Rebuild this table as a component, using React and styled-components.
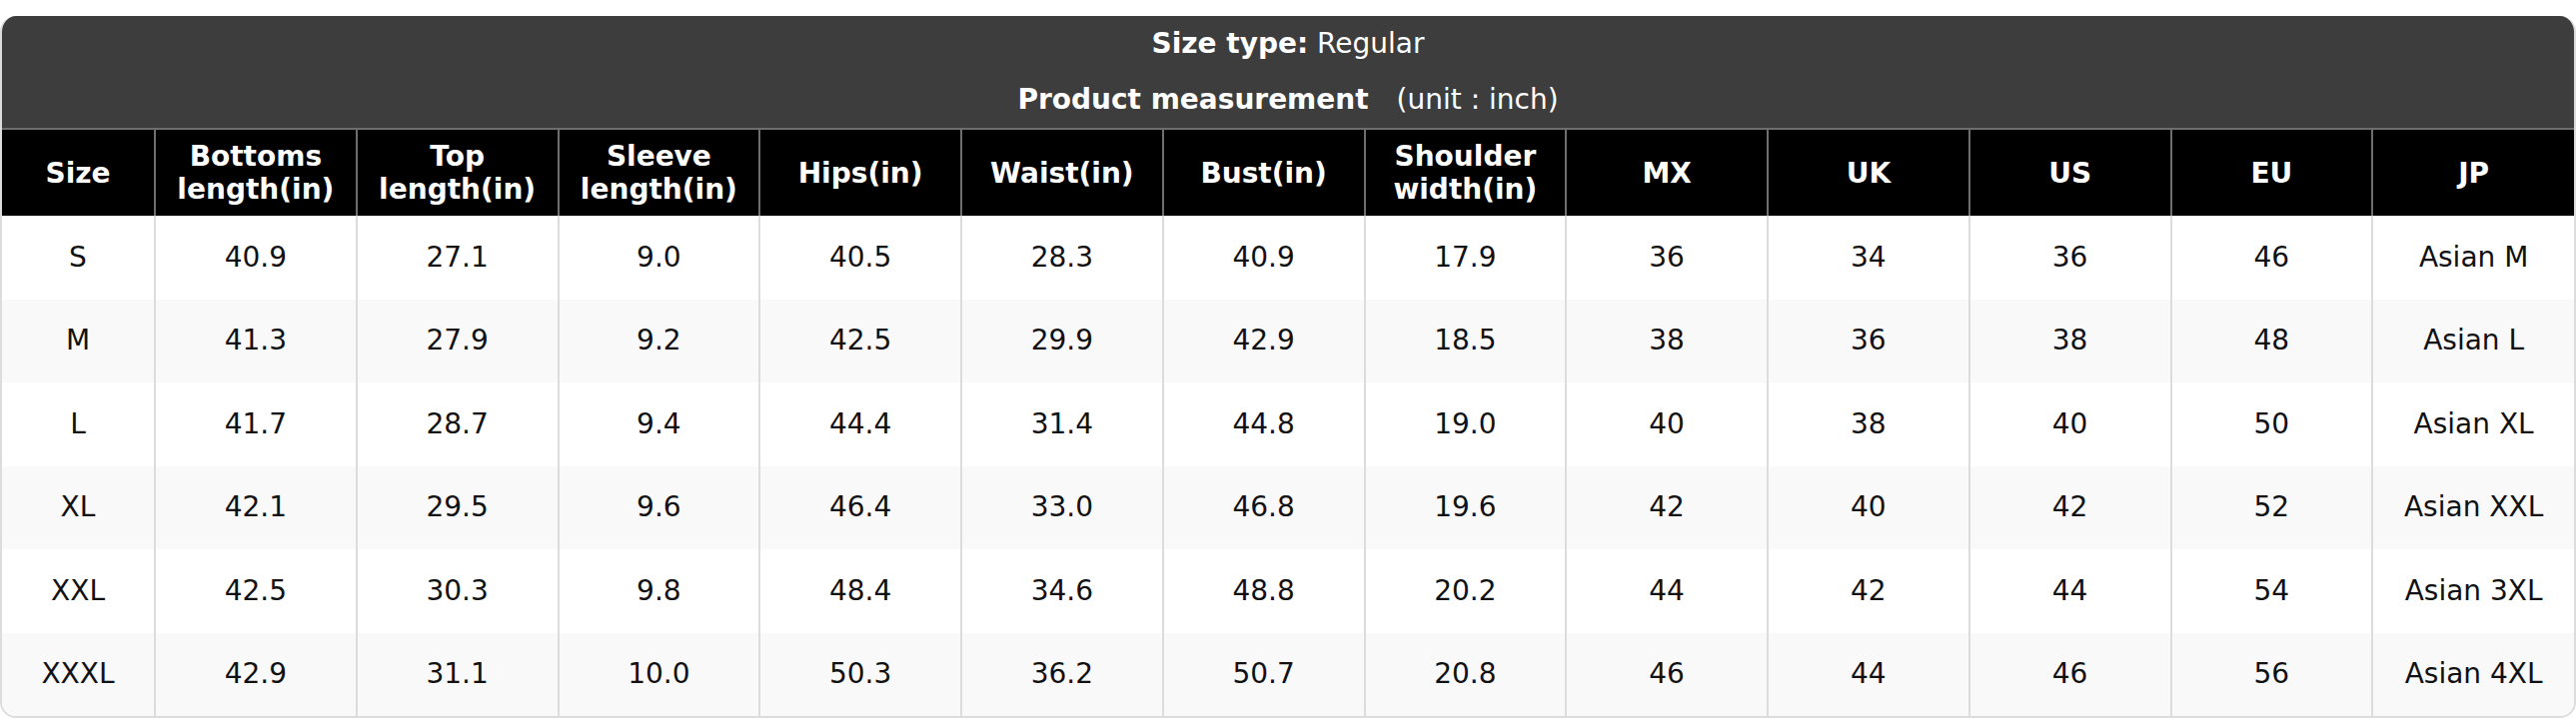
import React from "react";
import styled, { createGlobalStyle } from "styled-components";

const GlobalStyle = createGlobalStyle`
  html, body {
    margin: 0;
    padding: 0;
    background: #ffffff;
    font-family: "DejaVu Sans", "Noto Sans", sans-serif;
  }
`;

const Card = styled.div`
  margin-top: 16px;
  width: 100%;
  box-sizing: border-box;
  border-radius: 16px;
  overflow: hidden;
  border: 2px solid #dcdcdc;
  border-top: none;
  background: #ffffff;
`;

const Banner = styled.div`
  background: #3d3d3d;
  color: #ffffff;
  display: flex;
  flex-direction: column;
  align-items: center;
`;

const BannerLine = styled.div`
  font-size: 28px;
  line-height: 34px;
  padding: 11px 0;
  white-space: pre;
`;

const Strong = styled.span`
  font-weight: bold;
`;

const Unit = styled.span`
  margin-left: 28px;
`;

const Table = styled.table`
  width: 100%;
  border-collapse: collapse;
  table-layout: fixed;
`;

const HeadCell = styled.th`
  background: #000000;
  color: #ffffff;
  font-size: 28px;
  line-height: 33px;
  font-weight: bold;
  padding: 10px 4px;
  height: 86px;
  box-sizing: border-box;
  border: 2px solid #6e6e6e;
  border-bottom: none;
  &:first-child {
    border-left: none;
  }
  &:last-child {
    border-right: none;
  }
`;

const Row = styled.tr`
  background: ${(p) => (p.$alt ? "#f9f9f9" : "#ffffff")};
`;

const Cell = styled.td`
  font-size: 28px;
  line-height: 34px;
  color: #111111;
  text-align: center;
  height: 83.5px;
  box-sizing: border-box;
  padding: 0 4px;
  border-left: 2px solid #dcdcdc;
  &:first-child {
    border-left: none;
  }
`;

const headers = [
  "Size",
  "Bottoms length(in)",
  "Top length(in)",
  "Sleeve length(in)",
  "Hips(in)",
  "Waist(in)",
  "Bust(in)",
  "Shoulder width(in)",
  "MX",
  "UK",
  "US",
  "EU",
  "JP",
];

const rows = [
  ["S", "40.9", "27.1", "9.0", "40.5", "28.3", "40.9", "17.9", "36", "34", "36", "46", "Asian M"],
  ["M", "41.3", "27.9", "9.2", "42.5", "29.9", "42.9", "18.5", "38", "36", "38", "48", "Asian L"],
  ["L", "41.7", "28.7", "9.4", "44.4", "31.4", "44.8", "19.0", "40", "38", "40", "50", "Asian XL"],
  ["XL", "42.1", "29.5", "9.6", "46.4", "33.0", "46.8", "19.6", "42", "40", "42", "52", "Asian XXL"],
  ["XXL", "42.5", "30.3", "9.8", "48.4", "34.6", "48.8", "20.2", "44", "42", "44", "54", "Asian 3XL"],
  ["XXXL", "42.9", "31.1", "10.0", "50.3", "36.2", "50.7", "20.8", "46", "44", "46", "56", "Asian 4XL"],
];

export default function App() {
  return (
    <>
      <GlobalStyle />
      <Card>
        <Banner>
          <BannerLine>
            <Strong>Size type:</Strong> Regular
          </BannerLine>
          <BannerLine>
            <Strong>Product measurement</Strong>
            <Unit>(unit : inch)</Unit>
          </BannerLine>
        </Banner>
        <Table>
          <colgroup>
            <col style={{ width: "153px" }} />
            {headers.slice(1).map((h) => (
              <col key={h} />
            ))}
          </colgroup>
          <thead>
            <tr>
              {headers.map((h) => (
                <HeadCell key={h}>{h}</HeadCell>
              ))}
            </tr>
          </thead>
          <tbody>
            {rows.map((r, i) => (
              <Row key={r[0]} $alt={i % 2 === 1}>
                {r.map((v, j) => (
                  <Cell key={j}>{v}</Cell>
                ))}
              </Row>
            ))}
          </tbody>
        </Table>
      </Card>
    </>
  );
}
